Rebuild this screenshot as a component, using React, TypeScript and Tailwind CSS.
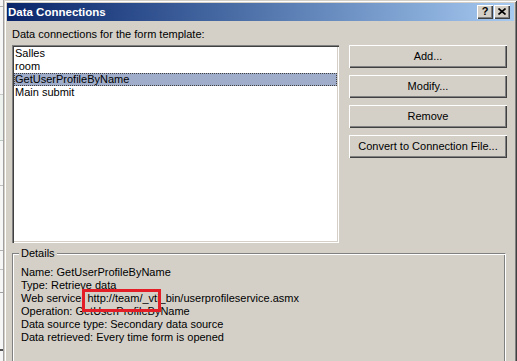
const ITEMS = ['Salles', 'room', 'GetUserProfileByName', 'Main submit'];
const SELECTED = 2;

const DETAILS = [
  'Name: GetUserProfileByName',
  'Type: Retrieve data',
  'Web service: http://team/_vti_bin/userprofileservice.asmx',
  'Operation: GetUserProfileByName',
  'Data source type: Secondary data source',
  'Data retrieved: Every time form is opened',
];

const BUTTONS = ['Add...', 'Modify...', 'Remove', 'Convert to Connection File...'];

function ClassicButton({ label }: { label: string }) {
  return (
    <div className="h-[23px] w-[158px] flex items-center justify-center bg-[#d4d0c8] text-black shadow-[inset_1px_1px_0_#ffffff,inset_-1px_-1px_0_#404040,inset_-2px_-2px_0_#808080]">
      {label}
    </div>
  );
}

function CaptionButton({ children }: { children: React.ReactNode }) {
  return (
    <div className="w-[16px] h-[14px] flex items-center justify-center bg-[#d4d0c8] shadow-[inset_1px_1px_0_#ffffff,inset_-1px_-1px_0_#404040,inset_-2px_-2px_0_#808080]">
      {children}
    </div>
  );
}

export default function App() {
  return (
    <div
      className="w-[517px] h-[361px] overflow-hidden flex items-start bg-[#f4f4f4] text-[11px] leading-[13px] text-black"
      style={{ fontFamily: '"Liberation Sans", Arial, sans-serif' }}
    >
      {/* window behind the dialog */}
      <div className="w-[4px] h-[361px] flex flex-col border-r border-[#a0a0a0] bg-[#f6f6f6]">
        <div className="h-[7px] border-b border-[#b0b0b0]" />
        <div className="h-[88px] border-b border-[#c8c8c8]" />
        <div className="h-[46px] border-b border-[#b8c8c0] bg-[#eef2ef]" />
        <div className="h-[45px] border-b border-[#c0c0c0]" />
        <div className="h-[65px] border-b border-[#b0b0b0]" />
        <div className="h-[19px] border-b border-[#c0c0c0]" />
        <div className="h-[23px] border-b border-[#a0a0a0]" />
        <div className="h-[58px] border-b-2 border-[#505050]" />
      </div>

      {/* dialog */}
      <div className="w-[513px] h-[400px] flex flex-col p-[3px] bg-[#d4d0c8] shadow-[inset_1px_1px_0_#d4d0c8,inset_-1px_-1px_0_#404040,inset_2px_2px_0_#ffffff,inset_-2px_-2px_0_#808080]">
        {/* title bar */}
        <div className="h-[18px] flex items-center justify-between pl-[1px] pr-[4px] bg-gradient-to-r from-[#0a246a] to-[#a6caf0]">
          <span className="text-white font-bold text-[11.5px]">Data Connections</span>
          <div className="flex gap-[1px]">
            <CaptionButton>
              <span className="font-bold text-[11px] leading-[11px] mt-[-1px]">?</span>
            </CaptionButton>
            <CaptionButton>
              <svg width="8" height="7" viewBox="0 0 8 7" className="mt-[-1px]">
                <path d="M0.5 0.5 L7.5 6.5 M7.5 0.5 L0.5 6.5" stroke="#000" strokeWidth="1.6" />
              </svg>
            </CaptionButton>
          </div>
        </div>

        {/* content */}
        <div className="flex flex-col pl-[5px] pr-[6px] pt-[7px]">
          <div>Data connections for the form template:</div>

          <div className="flex mt-[4px] gap-[10px]">
            <div className="w-[327px] h-[198px] bg-white p-[2px] shadow-[inset_1px_1px_0_#808080,inset_2px_2px_0_#404040,inset_-1px_-1px_0_#ffffff,inset_-2px_-2px_0_#d4d0c8]">
              {ITEMS.map((item, i) => (
                <div
                  key={item}
                  className={
                    i === SELECTED
                      ? 'h-[13px] pl-[0px] bg-[#9fadca] border border-dotted border-[#404040] leading-[11px] whitespace-nowrap'
                      : 'h-[13px] pl-[1px] whitespace-nowrap'
                  }
                >
                  {item}
                </div>
              ))}
            </div>

            <div className="flex flex-col gap-[7px]">
              {BUTTONS.map((b) => (
                <ClassicButton key={b} label={b} />
              ))}
            </div>
          </div>

          {/* Details group box */}
          <div className="relative mt-[10px] w-[494px] h-[140px] border-t border-l border-[#808080] border-r border-r-white shadow-[inset_1px_1px_0_#ffffff,inset_-1px_0_0_#808080] pt-[12px] pl-[8px]">
            <span className="absolute -top-[7px] left-[6px] px-[2px] bg-[#d4d0c8]">Details</span>
            {DETAILS.map((d) => (
              <div key={d} className="whitespace-nowrap">
                {d}
              </div>
            ))}
            {/* annotation box */}
            <div className="absolute left-[69px] top-[35px] w-[79px] h-[23px] border-[3px] border-[#e41e26]" />
          </div>
        </div>
      </div>
    </div>
  );
}
